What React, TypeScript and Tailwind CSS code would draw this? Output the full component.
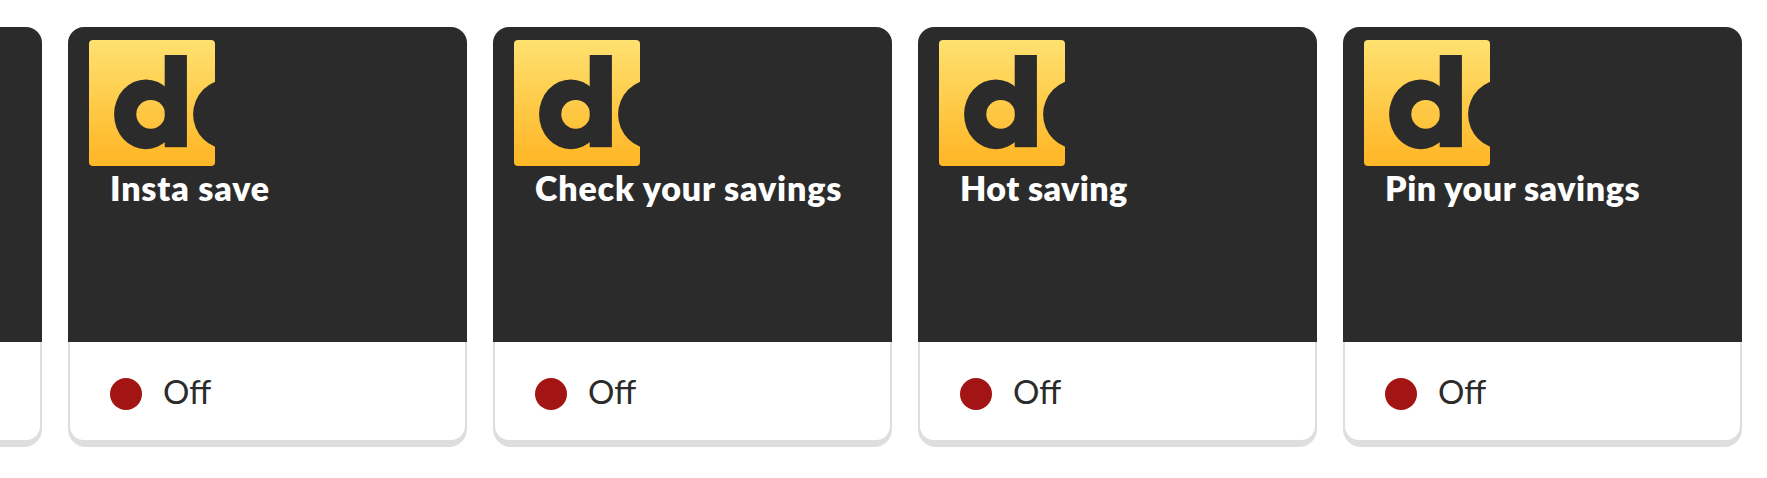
type Saving = {
  id: string
  title?: string
  titleClass?: string
}

const savings: Saving[] = [
  { id: 'previous' },
  { id: 'insta', title: 'Insta save', titleClass: 'tracking-[0.82px]' },
  { id: 'check', title: 'Check your savings', titleClass: 'tracking-[0.86px]' },
  { id: 'hot', title: 'Hot saving', titleClass: 'tracking-[0.42px]' },
  { id: 'pin', title: 'Pin your savings', titleClass: 'tracking-[0.54px]' },
]

function Logo({ id }: { id: string }) {
  return (
    <svg className="block size-[126px] rounded-[4px]" viewBox="0 0 126 126" aria-hidden="true">
      <defs>
        <linearGradient id={id} gradientUnits="userSpaceOnUse" x1="0" y1="0" x2="0" y2="126">
          <stop offset="0" stopColor="#ffe170" />
          <stop offset="0.5" stopColor="#fecb49" />
          <stop offset="0.9" stopColor="#ffb92b" />
          <stop offset="1" stopColor="#ffb726" />
        </linearGradient>
      </defs>
      <rect width="126" height="126" fill={`url(#${id})`} />
      <ellipse cx="56.8" cy="74.3" rx="31.7" ry="34.9" fill="#2b2b2b" />
      <circle cx="61.7" cy="74.3" r="14.4" fill={`url(#${id})`} />
      <rect x="75.7" y="15" width="22.2" height="92.2" fill="#2b2b2b" />
      <circle cx="139" cy="74.3" r="34.9" fill="#2b2b2b" />
    </svg>
  )
}

function SavingCard({ saving }: { saving: Saving }) {
  return (
    <div className="w-[399px] h-[420px] shrink-0 flex flex-col">
      {/* Header */}
      <div className="h-[315px] shrink-0 bg-[#2b2b2b] rounded-t-2xl pt-[13px] pl-[21px]">
        {saving.title && (
          <>
            <Logo id={`logo-${saving.id}`} />
            <h3 className={`pl-[21px] pt-[2px] text-[34px] leading-10 font-extrabold text-white whitespace-nowrap ${saving.titleClass}`}>
              {saving.title}
            </h3>
          </>
        )}
      </div>

      {/* Status */}
      <div className="flex-1 bg-[#dedede] rounded-b-[18px] px-[2px] pb-[7px]">
        <div className="h-full bg-white rounded-b-[14px] flex items-center gap-[21px] pl-10 pt-[6px]">
          {saving.title && (
            <>
              <span className="size-8 rounded-full bg-[#a31515]" />
              <span className="pb-[6px] text-[33px] leading-10 text-[#2b2b2b]">Off</span>
            </>
          )}
        </div>
      </div>
    </div>
  )
}

export default function App() {
  return (
    <div className="h-[478px] w-full overflow-hidden bg-white pt-[27px] font-['Lato',sans-serif]">
      <div className="flex gap-[26px] -ml-[357px]">
        {savings.map((saving) => (
          <SavingCard key={saving.id} saving={saving} />
        ))}
      </div>
    </div>
  )
}
